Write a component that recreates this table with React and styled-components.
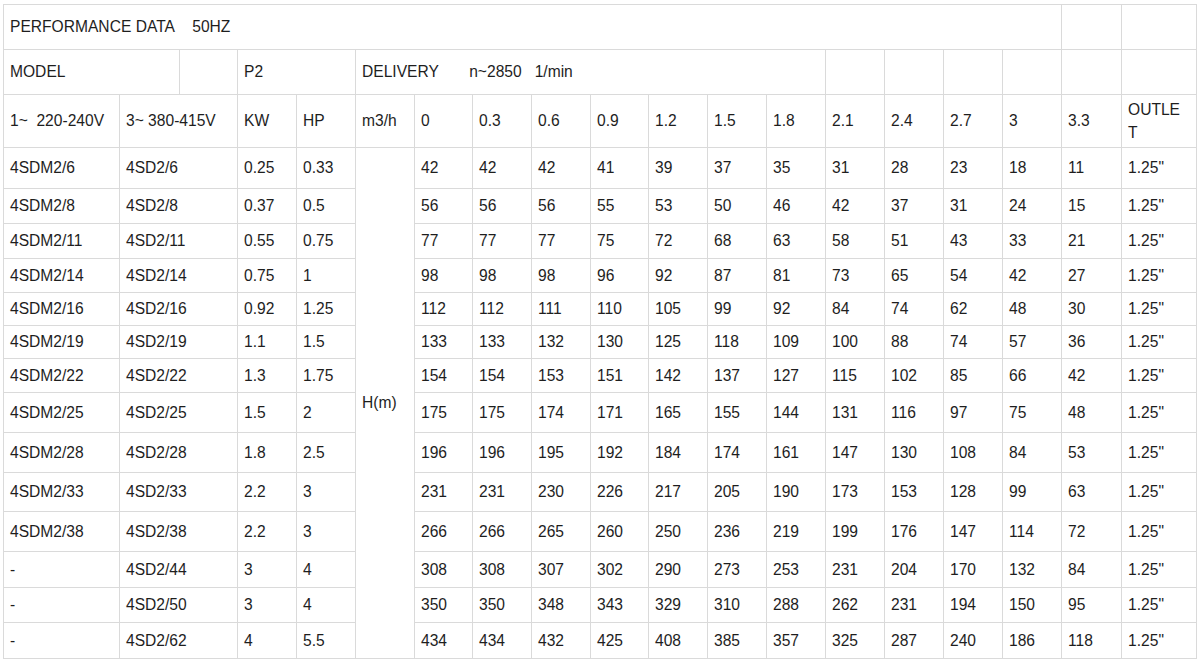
import React from 'react';
import styled, { createGlobalStyle } from 'styled-components';

const GlobalStyle = createGlobalStyle`
    html, body {
        margin: 0;
        padding: 0;
        background: #fff;
    }
    body {
        font-family: "Liberation Sans", Arial, sans-serif;
        color: #222;
    }
`;

const Page = styled.div`
    padding: 4px 0 0 3px;
`;

const Table = styled.table`
    border-collapse: collapse;
    table-layout: fixed;
    width: 1194px;
    font-size: 15.6px;
    line-height: 1.48;
`;

const Row = styled.tr`
    height: ${({ h }) => h}px;
`;

const Cell = styled.td`
    border: 1px solid #dadada;
    padding: 0 8px 0 6px;
    vertical-align: middle;
    text-align: left;
    white-space: pre;
    color: #1e1e1e;
    overflow: hidden;
`;

const WrapCell = styled(Cell)`
    white-space: normal;
    word-break: break-all;
    padding-right: 9px;
`;

const widths = [116, 60, 58, 59, 59, 59, 58, 59, 59, 58, 59, 59, 59, 59, 59, 59, 59, 60, 75];

const flows = ['0', '0.3', '0.6', '0.9', '1.2', '1.5', '1.8', '2.1', '2.4', '2.7', '3', '3.3'];

const data = [
    ['4SDM2/6', '4SD2/6', '0.25', '0.33', [42, 42, 42, 41, 39, 37, 35, 31, 28, 23, 18, 11], 41],
    ['4SDM2/8', '4SD2/8', '0.37', '0.5', [56, 56, 56, 55, 53, 50, 46, 42, 37, 31, 24, 15], 35],
    ['4SDM2/11', '4SD2/11', '0.55', '0.75', [77, 77, 77, 75, 72, 68, 63, 58, 51, 43, 33, 21], 35],
    ['4SDM2/14', '4SD2/14', '0.75', '1', [98, 98, 98, 96, 92, 87, 81, 73, 65, 54, 42, 27], 34],
    ['4SDM2/16', '4SD2/16', '0.92', '1.25', [112, 112, 111, 110, 105, 99, 92, 84, 74, 62, 48, 30], 33],
    ['4SDM2/19', '4SD2/19', '1.1', '1.5', [133, 133, 132, 130, 125, 118, 109, 100, 88, 74, 57, 36], 33],
    ['4SDM2/22', '4SD2/22', '1.3', '1.75', [154, 154, 153, 151, 142, 137, 127, 115, 102, 85, 66, 42], 34],
    ['4SDM2/25', '4SD2/25', '1.5', '2', [175, 175, 174, 171, 165, 155, 144, 131, 116, 97, 75, 48], 40],
    ['4SDM2/28', '4SD2/28', '1.8', '2.5', [196, 196, 195, 192, 184, 174, 161, 147, 130, 108, 84, 53], 40],
    ['4SDM2/33', '4SD2/33', '2.2', '3', [231, 231, 230, 226, 217, 205, 190, 173, 153, 128, 99, 63], 39],
    ['4SDM2/38', '4SD2/38', '2.2', '3', [266, 266, 265, 260, 250, 236, 219, 199, 176, 147, 114, 72], 40],
    ['-', '4SD2/44', '3', '4', [308, 308, 307, 302, 290, 273, 253, 231, 204, 170, 132, 84], 36],
    ['-', '4SD2/50', '3', '4', [350, 350, 348, 343, 329, 310, 288, 262, 231, 194, 150, 95], 35],
    ['-', '4SD2/62', '4', '5.5', [434, 434, 432, 425, 408, 385, 357, 325, 287, 240, 186, 118], 36],
];

const NB = '\u00a0';

export default function App() {
    return (
        <Page>
            <GlobalStyle />
            <Table>
                <colgroup>
                    {widths.map((w, i) => <col key={i} style={{ width: w }} />)}
                </colgroup>
                <tbody>
                    <Row h={45}>
                        <Cell colSpan={17}>{`PERFORMANCE DATA${NB.repeat(4)}50HZ`}</Cell>
                        <Cell></Cell>
                        <Cell></Cell>
                    </Row>
                    <Row h={45}>
                        <Cell colSpan={2}>MODEL</Cell>
                        <Cell></Cell>
                        <Cell colSpan={2}>P2</Cell>
                        <Cell colSpan={8}>{`DELIVERY${NB.repeat(7)}n~2850${NB.repeat(3)}1/min`}</Cell>
                        <Cell></Cell>
                        <Cell></Cell>
                        <Cell></Cell>
                        <Cell></Cell>
                        <Cell></Cell>
                        <Cell></Cell>
                    </Row>
                    <Row h={53}>
                        <Cell>{`1~${NB}${NB}220-240V`}</Cell>
                        <Cell colSpan={2}>3~ 380-415V</Cell>
                        <Cell>KW</Cell>
                        <Cell>HP</Cell>
                        <Cell>m3/h</Cell>
                        {flows.map(f => <Cell key={f}>{f}</Cell>)}
                        <WrapCell>OUTLET</WrapCell>
                    </Row>
                    {data.map(([single, three, kw, hp, heads, h], r) => (
                        <Row h={h} key={three}>
                            <Cell>{single}</Cell>
                            <Cell colSpan={2}>{three}</Cell>
                            <Cell>{kw}</Cell>
                            <Cell>{hp}</Cell>
                            {r === 0 && <Cell rowSpan={data.length}>H(m)</Cell>}
                            {heads.map((v, i) => <Cell key={i}>{v}</Cell>)}
                            <Cell>1.25"</Cell>
                        </Row>
                    ))}
                </tbody>
            </Table>
        </Page>
    );
}
